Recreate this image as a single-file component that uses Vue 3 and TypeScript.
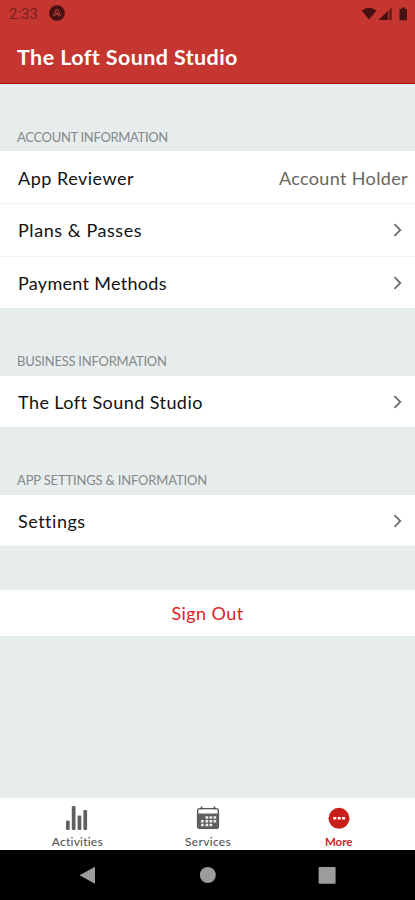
<script setup lang="ts">
interface Row {
  label: string
  value?: string
  fit: string
}
interface Section {
  title: string
  fit: string
  rows: Row[]
}

const sections: Section[] = [
  {
    title: 'ACCOUNT INFORMATION',
    fit: 'account',
    rows: [
      { label: 'App Reviewer', value: 'Account Holder', fit: 'reviewer' },
      { label: 'Plans & Passes', fit: 'plans' },
      { label: 'Payment Methods', fit: 'payment' },
    ],
  },
  {
    title: 'BUSINESS INFORMATION',
    fit: 'business',
    rows: [{ label: 'The Loft Sound Studio', fit: 'studio' }],
  },
  {
    title: 'APP SETTINGS & INFORMATION',
    fit: 'app',
    rows: [{ label: 'Settings', fit: 'settings' }],
  },
]
</script>

<template>
  <div class="screen">
    <header class="header">
      <div class="status">
        <span class="clock">2:33</span>
        <svg class="badge" width="16" height="16" viewBox="0 0 16 16">
          <circle cx="8" cy="8" r="7.8" fill="#471012" />
          <path d="M4.200 11.200 7.200 4.800h1.600l3 6.400M6.300 10.600 8 8l1.700 2.600" fill="none" stroke="#b4403a" stroke-width="1.100" />
        </svg>
        <svg class="signals" width="48" height="16" viewBox="0 0 48 16">
          <path d="M.8 4.8Q8-1.2 15.400 4.800L8.100 13.400z" fill="#471012" />
          <path d="M17.500 14 30.500 1.800V14z" fill="#8b2523" />
          <path d="M17.500 14 26.500 5.600V14z" fill="#471012" />
          <path d="M29 3.200v10.800h1.500V1.800z" fill="#571616" />
          <path d="M38.500 3h2V1.500h3.500V3h2v11.300h-7.500z" fill="#471012" />
        </svg>
      </div>
      <h1 class="title">The Loft Sound Studio</h1>
    </header>

    <main class="content">
      <section v-for="section in sections" :key="section.title" class="section">
        <h2 class="caption" :class="section.fit">{{ section.title }}</h2>
        <div class="card">
          <div v-for="row in section.rows" :key="row.label" class="row">
            <span class="label" :class="row.fit">{{ row.label }}</span>
            <span v-if="row.value" class="value">{{ row.value }}</span>
            <svg v-else class="chevron" width="10" height="16" viewBox="0 0 10 16">
              <path d="M1.500 2.200 7.300 8 1.500 13.800" fill="none" stroke="#6c6c6c" stroke-width="1.800" />
            </svg>
          </div>
        </div>
      </section>
      <button class="signout" type="button">Sign Out</button>
    </main>

    <nav class="tabs">
      <div class="tab">
        <svg class="icon" width="24" height="26" viewBox="0 0 24 26" fill="#606060">
          <rect x="1" y="15.500" width="3.700" height="9.500" rx="1" />
          <rect x="6.800" y="1" width="3.700" height="24" rx="1" />
          <rect x="12.600" y="10.500" width="3.700" height="14.500" rx="1" />
          <rect x="18.400" y="5" width="3.700" height="20" rx="1" />
        </svg>
        <span class="activities">Activities</span>
      </div>
      <div class="tab">
        <svg class="icon" width="24" height="26" viewBox="0 0 24 26">
          <rect x="1.600" y="3.600" width="20.800" height="19.800" rx="2" fill="#fff" stroke="#555" stroke-width="1.400" />
          <path d="M5.500 1.500v3M18.500 1.500v3" stroke="#555" stroke-width="1.600" />
          <path d="M1.500 8.500h21V21.500q0 2-2 2h-17q-2 0-2-2z" fill="#606060" />
          <path d="M9.500 12.500h2.700M13.500 12.500h2.700M17.500 12.500h2.700M5 16.200h2.700M9.500 16.200h2.700M13.500 16.200h2.700M17.500 16.200h2.700M5 20h2.700M9.500 20h2.700M13.500 20h2.700" stroke="#eee" stroke-width="2.500" />
        </svg>
        <span class="services">Services</span>
      </div>
      <div class="tab active">
        <svg class="icon" width="24" height="26" viewBox="0 0 24 26">
          <circle cx="12" cy="13.300" r="10.500" fill="#c91f1c" />
          <path d="M6.300 13.200h3M10.700 13.200h3M15.100 13.200h3" stroke="#fff" stroke-width="2.600" />
        </svg>
        <span class="more">More</span>
      </div>
    </nav>

    <footer class="system">
      <svg width="18" height="20" viewBox="0 0 18 20"><path d="M.5 10.300 16 1.800v17z" fill="#9c9c9c" /></svg>
      <svg width="18" height="20" viewBox="0 0 18 20"><circle cx="8.800" cy="10" r="8" fill="#9c9c9c" /></svg>
      <svg width="18" height="20" viewBox="0 0 18 20"><rect x=".6" y="2" width="17" height="16.700" rx="1" fill="#9c9c9c" /></svg>
    </footer>
  </div>
</template>

<style>
body {
  margin: 0;
}
</style>

<style scoped>
.screen {
  width: 415px;
  height: 900px;
  display: flex;
  flex-direction: column;
  overflow: hidden;
  background: #e7eded;
  color: #111;
  font-family: Lato, "Noto Sans", sans-serif;
  white-space: nowrap;
}
.header {
  box-sizing: border-box;
  height: 84px;
  flex: none;
  background: #c4362f;
  border-bottom: 1px solid #b40d0f;
}
.status {
  display: flex;
  align-items: flex-start;
  height: 28px;
  padding: 0 10px 0 9px;
}
.clock {
  width: 40px;
  padding-top: 5px;
  font: 15px/18px Roboto, sans-serif;
  color: #762021;
}
.badge {
  margin-top: 5px;
}
.signals {
  margin: 6px -4px 0 auto;
}
.title {
  margin: 0;
  padding: 15px 17px 0;
  color: #fff;
  font-size: 21.5px;
  line-height: 28px;
  font-weight: 700;
  letter-spacing: 0.4px;
}
.content {
  flex: 1;
}
.caption {
  box-sizing: border-box;
  height: 67px;
  margin: 0;
  padding: 44px 17px 0;
  font-size: 13px;
  line-height: 16px;
  font-weight: 400;
  color: #858989;
}
.caption.account {
  padding-top: 45px;
  letter-spacing: -0.32px;
}
.caption.business {
  letter-spacing: -0.24px;
}
.caption.app {
  letter-spacing: -0.17px;
}
.card {
  background: #fff;
  border-bottom: 1px solid #e3e6e6;
}
.row {
  box-sizing: border-box;
  height: 52px;
  padding: 1px 7px 0 18px;
  display: flex;
  align-items: center;
  justify-content: space-between;
  font-size: 18px;
}
.row:only-child {
  height: 51px;
}
.row + .row {
  height: 53px;
  padding: 0 7px 1px 18px;
  border-top: 1px solid #f3f4f4;
}
.row:last-child:not(:first-child) {
  height: 52px;
  padding: 1px 7px 0 18px;
}
.label {
  letter-spacing: 0.5px;
}
.plans {
  letter-spacing: 0.57px;
}
.payment {
  letter-spacing: 0.3px;
}
.studio {
  letter-spacing: 0.43px;
}
.value {
  color: #666;
  letter-spacing: 0.36px;
}
.chevron {
  margin-right: 5px;
}
.signout {
  display: block;
  width: 100%;
  height: 46px;
  margin: 43px 0 0;
  padding: 0;
  border: 0;
  background: #fff;
  color: #e12226;
  font: inherit;
  font-size: 18px;
  letter-spacing: 0.4px;
}
.tabs {
  box-sizing: border-box;
  height: 52px;
  flex: none;
  padding: 0 11px 0 12px;
  display: grid;
  grid-template-columns: repeat(3, 1fr);
  background: #fff;
}
.tab {
  display: flex;
  flex-direction: column;
  align-items: center;
  padding-top: 7px;
  color: #555;
  font-size: 12px;
  line-height: 14px;
  font-weight: 500;
}
.tab .icon {
  margin-bottom: 4px;
}
.activities {
  letter-spacing: 0.2px;
}
.services {
  letter-spacing: 0.3px;
}
.more {
  font-size: 11.5px;
}
.active {
  color: #c91f1c;
  font-weight: 700;
}
.system {
  box-sizing: border-box;
  height: 50px;
  flex: none;
  padding: 15px 79px 0;
  display: flex;
  justify-content: space-between;
  background: #000;
}
</style>
